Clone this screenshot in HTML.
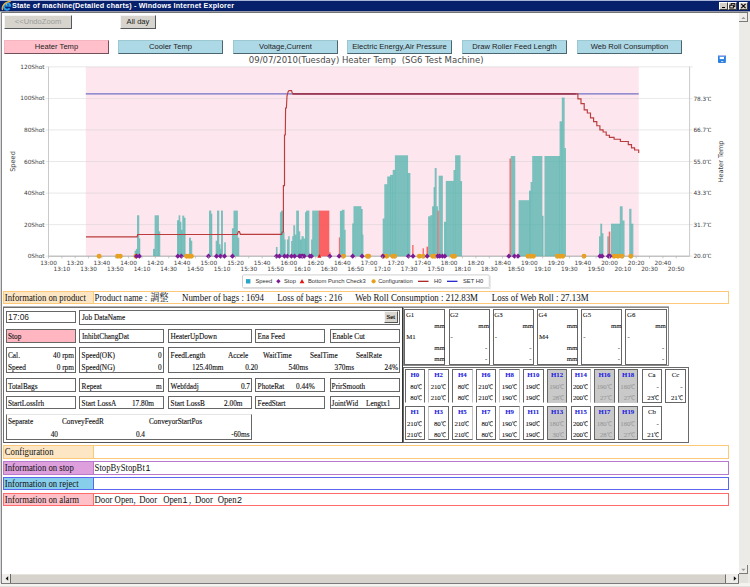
<!DOCTYPE html><html><head><meta charset="utf-8"><title>State of machine(Detailed charts)</title><style>
html,body{margin:0;padding:0;background:#fff;}
body{width:750px;height:587px;overflow:hidden;position:relative;font-family:"Liberation Serif","Noto Sans CJK JP",serif;}
.a{position:absolute;box-sizing:border-box;}
.t{position:absolute;white-space:nowrap;line-height:1;}
.sans{font-family:"Liberation Sans","Noto Sans CJK JP",sans-serif;}
.btn{position:absolute;box-sizing:border-box;font-family:"Liberation Sans",sans-serif;font-size:7.6px;text-align:center;color:#222;border-right:1px solid #55585c;border-bottom:1px solid #55585c;border-top:1px solid #f4f4f4;border-left:1px solid #f4f4f4;white-space:nowrap;}
.cell{position:absolute;box-sizing:border-box;border:1px solid #666;background:#fff;}
.c{font-size:7.3px;color:#111;-webkit-text-stroke-width:0.12px;}
.dc{display:inline-block;font-family:'WenQuanYi Zen Hei','Noto Sans CJK JP',sans-serif;font-size:0.9em;width:0.8em;transform:scaleX(.87);transform-origin:0 50%;}
.ir{transform:scaleY(1.1);transform-origin:0 100%;margin-top:0.4px;}
.h{font-size:6.8px;color:#111;-webkit-text-stroke-width:0.08px;}
</style></head><body>
<div class="a" style="left:0;top:0;width:750px;height:11px;background:#07206b;border-top:1px solid #a9b5d6"></div>
<svg class="a" style="left:1px;top:0px" width="12" height="12" viewBox="0 0 12 12"><path d="M9.3 6.6 A3.3 3.3 0 1 0 8.6 8.4" fill="none" stroke="#2a9be8" stroke-width="2"/><rect x="3.4" y="5.3" width="6" height="1.3" fill="#2a9be8"/><circle cx="5.6" cy="4.6" r="0.9" fill="#5fd0f0"/><path d="M1.6 10 C0.2 6.5 4 1.6 9.8 1.4" fill="none" stroke="#f0b030" stroke-width="1.3"/></svg>
<div class="t sans" id="title" style="left:12px;top:2.2px;font-size:7.2px;font-weight:bold;color:#fff;letter-spacing:0.18px">State of machine(Detailed charts) - Windows Internet Explorer</div>
<div class="a" style="left:719px;top:2px;width:9px;height:8px;background:#d4d0c8;border-top:1px solid #fff;border-left:1px solid #fff;border-right:1px solid #404040;border-bottom:1px solid #404040"></div>
<div class="a" style="left:728px;top:2px;width:9px;height:8px;background:#d4d0c8;border-top:1px solid #fff;border-left:1px solid #fff;border-right:1px solid #404040;border-bottom:1px solid #404040"></div>
<div class="a" style="left:739px;top:2px;width:9px;height:8px;background:#d4d0c8;border-top:1px solid #fff;border-left:1px solid #fff;border-right:1px solid #404040;border-bottom:1px solid #404040"></div>
<div class="a" style="left:722px;top:7px;width:3px;height:1px;background:#000"></div>
<svg class="a" style="left:729px;top:3px" width="7" height="6" viewBox="0 0 7 6"><rect x="2.2" y="0.6" width="3.6" height="2.8" fill="none" stroke="#000" stroke-width="0.9"/><rect x="0.8" y="2.2" width="3.6" height="2.8" fill="#d4d0c8" stroke="#000" stroke-width="0.9"/></svg>
<svg class="a" style="left:740px;top:3px" width="7" height="6" viewBox="0 0 7 6"><path d="M1.2 0.8 L5.6 5.2 M5.6 0.8 L1.2 5.2" stroke="#000" stroke-width="1.1"/></svg>
<div class="a" style="left:0;top:11px;width:750px;height:1px;background:#9598a6"></div><div class="a" style="left:0;top:12px;width:750px;height:1px;background:#747474"></div>
<div class="a" style="left:0;top:12px;width:1px;height:572px;background:#d8d8dc"></div>
<div class="a" style="left:1px;top:12px;width:1px;height:572px;background:#858585"></div>
<div class="a" style="left:748px;top:12px;width:2px;height:575px;background:#ecebe6"></div>
<div class="a" style="left:0;top:583px;width:750px;height:4px;background:#f4f3f0"></div><div class="a" style="left:0;top:586px;width:750px;height:1px;background:#e2e0db"></div>
<div class="a" style="left:1px;top:582px;width:738px;height:2px;background:#7a7a7a"></div>
<div class="a" style="left:739px;top:13px;width:9px;height:561px;background:#ecebe7"></div>
<div class="a" style="left:739px;top:13px;width:9px;height:9px;background:#eeedea;border-right:1px solid #7a7a7a;border-bottom:1px solid #7a7a7a"></div>
<svg class="a" style="left:741px;top:15.5px" width="5" height="4" viewBox="0 0 5 4"><path d="M0.3 3 L2.4 0.8 L4.5 3 Z" fill="#9a9a9a"/></svg>
<div class="a" style="left:739px;top:565px;width:9px;height:9px;background:#eeedea;border-right:1px solid #7a7a7a;border-bottom:1px solid #7a7a7a"></div>
<svg class="a" style="left:741px;top:568px" width="5" height="4" viewBox="0 0 5 4"><path d="M0.3 0.8 L2.4 3 L4.5 0.8 Z" fill="#9a9a9a"/></svg>
<div class="a" style="left:2px;top:574px;width:737px;height:9px;background:#ecebe7"></div>
<div class="a" style="left:2px;top:574px;width:9px;height:9px;background:#eeedea;border-right:1px solid #6a6a6a"></div>
<svg class="a" style="left:4.5px;top:576px" width="4" height="5" viewBox="0 0 4 5"><path d="M3.2 0.3 L0.6 2.5 L3.2 4.7 Z" fill="#111"/></svg>
<div class="a" style="left:11px;top:574px;width:715px;height:9px;background:#d6d3cc;border-right:1px solid #707070;border-top:1px solid #e6e4df"></div>
<div class="a" style="left:730px;top:574px;width:9px;height:9px;background:#eeedea;border-right:1px solid #6a6a6a"></div>
<svg class="a" style="left:733px;top:576px" width="4" height="5" viewBox="0 0 4 5"><path d="M0.8 0.3 L3.4 2.5 L0.8 4.7 Z" fill="#111"/></svg>
<div class="a" style="left:739px;top:574px;width:9px;height:9px;background:#e4e2dc"></div>
<div class="btn" style="left:4px;top:15px;width:68px;height:14px;line-height:11.5px;background:#d7d4cd;color:#9c9c9c;">&lt;&lt;UndoZoom</div>
<div class="btn" style="left:120px;top:15px;width:36px;height:14px;line-height:11.5px;background:#d7d4cd;">All day</div>
<div class="btn" style="left:4px;top:40px;width:105px;height:14px;line-height:11.5px;background:#ffc0cb;border-color:#f4b4c0 #74505a #74505a #f4b4c0;">Heater Temp</div>
<div class="btn" style="left:118px;top:40px;width:105px;height:14px;line-height:11.5px;background:#add8e6;border-color:#9cc8d2 #4a6670 #4a6670 #9cc8d2;">Cooler Temp</div>
<div class="btn" style="left:233px;top:40px;width:105px;height:14px;line-height:11.5px;background:#add8e6;border-color:#9cc8d2 #4a6670 #4a6670 #9cc8d2;">Voltage,Current</div>
<div class="btn" style="left:347px;top:40px;width:105px;height:14px;line-height:11.5px;background:#add8e6;border-color:#9cc8d2 #4a6670 #4a6670 #9cc8d2;">Electric Energy,Air Pressure</div>
<div class="btn" style="left:462px;top:40px;width:105px;height:14px;line-height:11.5px;background:#add8e6;border-color:#9cc8d2 #4a6670 #4a6670 #9cc8d2;">Draw Roller Feed Length</div>
<div class="btn" style="left:577px;top:40px;width:105px;height:14px;line-height:11.5px;background:#add8e6;border-color:#9cc8d2 #4a6670 #4a6670 #9cc8d2;">Web Roll Consumption</div>
<svg class="a" style="left:0;top:0" width="750" height="300" viewBox="0 0 750 300" font-family="DejaVu Sans, Liberation Sans, sans-serif">
<text x="366.2" y="62.8" font-size="8.52" fill="#4a4a4a" text-anchor="middle" id="ctitle" xml:space="preserve">09/07/2010(Tuesday) Heater Temp  (SG6 Test Machine)</text>
<rect x="85.8" y="66.8" width="552.9000000000001" height="189.39999999999998" fill="#fde6ee"/>
<line x1="45.5" x2="692.6" y1="256.2" y2="256.2" stroke="#d0d0d0" stroke-width="0.8" opacity="0.6"/>
<line x1="45.5" x2="692.6" y1="224.6" y2="224.6" stroke="#d0d0d0" stroke-width="0.8" opacity="0.6"/>
<line x1="45.5" x2="692.6" y1="193.1" y2="193.1" stroke="#d0d0d0" stroke-width="0.8" opacity="0.6"/>
<line x1="45.5" x2="692.6" y1="161.5" y2="161.5" stroke="#d0d0d0" stroke-width="0.8" opacity="0.6"/>
<line x1="45.5" x2="692.6" y1="129.9" y2="129.9" stroke="#d0d0d0" stroke-width="0.8" opacity="0.6"/>
<line x1="45.5" x2="692.6" y1="98.4" y2="98.4" stroke="#d0d0d0" stroke-width="0.8" opacity="0.6"/>
<line x1="45.5" x2="692.6" y1="66.8" y2="66.8" stroke="#d0d0d0" stroke-width="0.8" opacity="0.6"/>
<line x1="48.5" x2="48.5" y1="66.8" y2="256.2" stroke="#bdbdbd" stroke-width="0.8"/>
<line x1="689.6" x2="689.6" y1="66.8" y2="256.2" stroke="#bdbdbd" stroke-width="0.8"/>
<line x1="48.5" x2="689.6" y1="256.2" y2="256.2" stroke="#a8a8a8" stroke-width="0.9"/>
<rect x="134.6" y="250.7" width="1.65" height="5.5" fill="#4fb3ab" fill-opacity="0.75"/>
<rect x="135.9" y="248.9" width="1.45" height="7.3" fill="#4fb3ab" fill-opacity="0.75"/>
<rect x="137.0" y="215.3" width="2.25" height="40.9" fill="#4fb3ab" fill-opacity="0.75"/>
<rect x="138.9" y="238.5" width="1.35" height="17.7" fill="#4fb3ab" fill-opacity="0.75"/>
<rect x="153.0" y="248.9" width="1.95" height="7.3" fill="#4fb3ab" fill-opacity="0.75"/>
<rect x="154.6" y="215.3" width="4.35" height="40.9" fill="#4fb3ab" fill-opacity="0.75"/>
<rect x="158.6" y="231.4" width="1.65" height="24.8" fill="#4fb3ab" fill-opacity="0.75"/>
<rect x="177.0" y="220.2" width="1.95" height="36.0" fill="#4fb3ab" fill-opacity="0.75"/>
<rect x="178.6" y="215.3" width="1.65" height="40.9" fill="#4fb3ab" fill-opacity="0.75"/>
<rect x="179.9" y="221.8" width="1.45" height="34.4" fill="#4fb3ab" fill-opacity="0.75"/>
<rect x="181.0" y="229.8" width="1.65" height="26.4" fill="#4fb3ab" fill-opacity="0.75"/>
<rect x="182.3" y="215.6" width="1.95" height="40.6" fill="#4fb3ab" fill-opacity="0.75"/>
<rect x="183.9" y="217.8" width="1.65" height="38.4" fill="#4fb3ab" fill-opacity="0.75"/>
<rect x="189.0" y="237.7" width="1.95" height="18.5" fill="#4fb3ab" fill-opacity="0.75"/>
<rect x="190.6" y="240.7" width="1.65" height="15.5" fill="#4fb3ab" fill-opacity="0.75"/>
<rect x="209.0" y="210.6" width="2.25" height="45.6" fill="#4fb3ab" fill-opacity="0.75"/>
<rect x="210.9" y="213.7" width="1.35" height="42.5" fill="#4fb3ab" fill-opacity="0.75"/>
<rect x="215.7" y="240.7" width="1.65" height="15.5" fill="#4fb3ab" fill-opacity="0.75"/>
<rect x="217.0" y="210.6" width="2.25" height="45.6" fill="#4fb3ab" fill-opacity="0.75"/>
<rect x="218.9" y="244.2" width="1.65" height="12.0" fill="#4fb3ab" fill-opacity="0.75"/>
<rect x="220.2" y="248.9" width="1.15" height="7.3" fill="#4fb3ab" fill-opacity="0.75"/>
<rect x="221.0" y="210.6" width="1.95" height="45.6" fill="#4fb3ab" fill-opacity="0.75"/>
<rect x="224.2" y="242.3" width="1.65" height="13.9" fill="#4fb3ab" fill-opacity="0.75"/>
<rect x="231.9" y="228.3" width="1.95" height="27.9" fill="#4fb3ab" fill-opacity="0.75"/>
<rect x="233.5" y="210.6" width="4.35" height="45.6" fill="#4fb3ab" fill-opacity="0.75"/>
<rect x="237.5" y="237.7" width="1.75" height="18.5" fill="#4fb3ab" fill-opacity="0.75"/>
<rect x="275.9" y="247.0" width="1.65" height="9.2" fill="#4fb3ab" fill-opacity="0.75"/>
<rect x="279.9" y="212.2" width="1.45" height="44.0" fill="#4fb3ab" fill-opacity="0.75"/>
<rect x="281.0" y="210.6" width="2.25" height="45.6" fill="#4fb3ab" fill-opacity="0.75"/>
<rect x="282.9" y="232.2" width="1.65" height="24.0" fill="#4fb3ab" fill-opacity="0.75"/>
<rect x="284.2" y="239.5" width="1.45" height="16.7" fill="#4fb3ab" fill-opacity="0.75"/>
<rect x="286.9" y="239.5" width="1.65" height="16.7" fill="#4fb3ab" fill-opacity="0.75"/>
<rect x="288.2" y="236.2" width="1.45" height="20.0" fill="#4fb3ab" fill-opacity="0.75"/>
<rect x="291.1" y="241.0" width="1.45" height="15.2" fill="#4fb3ab" fill-opacity="0.75"/>
<rect x="292.2" y="236.2" width="1.45" height="20.0" fill="#4fb3ab" fill-opacity="0.75"/>
<rect x="293.3" y="225.3" width="1.85" height="30.9" fill="#4fb3ab" fill-opacity="0.75"/>
<rect x="294.8" y="234.6" width="1.75" height="21.6" fill="#4fb3ab" fill-opacity="0.75"/>
<rect x="296.2" y="210.6" width="2.75" height="45.6" fill="#4fb3ab" fill-opacity="0.75"/>
<rect x="298.6" y="231.4" width="1.65" height="24.8" fill="#4fb3ab" fill-opacity="0.75"/>
<rect x="299.9" y="239.5" width="1.95" height="16.7" fill="#4fb3ab" fill-opacity="0.75"/>
<rect x="301.5" y="236.2" width="2.25" height="20.0" fill="#4fb3ab" fill-opacity="0.75"/>
<rect x="303.4" y="238.5" width="1.95" height="17.7" fill="#4fb3ab" fill-opacity="0.75"/>
<rect x="305.0" y="212.2" width="1.45" height="44.0" fill="#4fb3ab" fill-opacity="0.75"/>
<rect x="306.1" y="210.6" width="3.25" height="45.6" fill="#4fb3ab" fill-opacity="0.75"/>
<rect x="311.1" y="239.5" width="1.45" height="16.7" fill="#4fb3ab" fill-opacity="0.75"/>
<rect x="312.2" y="210.6" width="7.05" height="45.6" fill="#4fb3ab" fill-opacity="0.75"/>
<rect x="339.9" y="210.9" width="2.25" height="45.3" fill="#4fb3ab" fill-opacity="0.75"/>
<rect x="341.8" y="209.8" width="2.75" height="46.4" fill="#4fb3ab" fill-opacity="0.75"/>
<rect x="344.2" y="229.8" width="1.45" height="26.4" fill="#4fb3ab" fill-opacity="0.75"/>
<rect x="352.2" y="223.4" width="1.65" height="32.8" fill="#4fb3ab" fill-opacity="0.75"/>
<rect x="353.5" y="206.2" width="7.85" height="50.0" fill="#4fb3ab" fill-opacity="0.75"/>
<rect x="361.0" y="209.0" width="1.65" height="47.2" fill="#4fb3ab" fill-opacity="0.75"/>
<rect x="362.3" y="234.6" width="1.15" height="21.6" fill="#4fb3ab" fill-opacity="0.75"/>
<rect x="382.7" y="218.5" width="1.95" height="37.7" fill="#4fb3ab" fill-opacity="0.75"/>
<rect x="384.3" y="184.2" width="3.25" height="72.0" fill="#4fb3ab" fill-opacity="0.75"/>
<rect x="387.2" y="176.5" width="3.15" height="79.7" fill="#4fb3ab" fill-opacity="0.75"/>
<rect x="390.0" y="174.9" width="3.05" height="81.3" fill="#4fb3ab" fill-opacity="0.75"/>
<rect x="392.7" y="169.9" width="2.55" height="86.3" fill="#4fb3ab" fill-opacity="0.75"/>
<rect x="394.9" y="155.3" width="13.15" height="100.9" fill="#4fb3ab" fill-opacity="0.75"/>
<rect x="407.7" y="173.0" width="2.65" height="83.2" fill="#4fb3ab" fill-opacity="0.75"/>
<rect x="428.1" y="216.3" width="2.55" height="39.9" fill="#4fb3ab" fill-opacity="0.75"/>
<rect x="430.3" y="215.2" width="2.15" height="41.0" fill="#4fb3ab" fill-opacity="0.75"/>
<rect x="432.1" y="206.3" width="1.85" height="49.9" fill="#4fb3ab" fill-opacity="0.75"/>
<rect x="433.6" y="187.1" width="1.45" height="69.1" fill="#4fb3ab" fill-opacity="0.75"/>
<rect x="434.7" y="168.0" width="1.95" height="88.2" fill="#4fb3ab" fill-opacity="0.75"/>
<rect x="436.3" y="206.3" width="1.65" height="49.9" fill="#4fb3ab" fill-opacity="0.75"/>
<rect x="438.7" y="175.7" width="4.15" height="80.5" fill="#4fb3ab" fill-opacity="0.75"/>
<rect x="444.0" y="221.8" width="2.15" height="34.4" fill="#4fb3ab" fill-opacity="0.75"/>
<rect x="445.8" y="180.9" width="8.05" height="75.3" fill="#4fb3ab" fill-opacity="0.75"/>
<rect x="453.5" y="170.0" width="1.95" height="86.2" fill="#4fb3ab" fill-opacity="0.75"/>
<rect x="455.1" y="155.3" width="5.45" height="100.9" fill="#4fb3ab" fill-opacity="0.75"/>
<rect x="460.2" y="181.1" width="1.85" height="75.1" fill="#4fb3ab" fill-opacity="0.75"/>
<rect x="510.8" y="156.0" width="4.45" height="100.2" fill="#4fb3ab" fill-opacity="0.75"/>
<rect x="518.6" y="200.2" width="10.75" height="56.0" fill="#4fb3ab" fill-opacity="0.75"/>
<rect x="529.0" y="190.7" width="1.95" height="65.5" fill="#4fb3ab" fill-opacity="0.75"/>
<rect x="530.6" y="182.0" width="1.95" height="74.2" fill="#4fb3ab" fill-opacity="0.75"/>
<rect x="532.2" y="156.0" width="10.15" height="100.2" fill="#4fb3ab" fill-opacity="0.75"/>
<rect x="542.0" y="215.8" width="1.55" height="40.4" fill="#4fb3ab" fill-opacity="0.75"/>
<rect x="544.5" y="156.0" width="15.45" height="100.2" fill="#4fb3ab" fill-opacity="0.75"/>
<rect x="559.6" y="121.3" width="2.55" height="134.9" fill="#4fb3ab" fill-opacity="0.75"/>
<rect x="561.8" y="97.6" width="2.85" height="158.6" fill="#4fb3ab" fill-opacity="0.75"/>
<rect x="564.3" y="148.1" width="1.65" height="108.1" fill="#4fb3ab" fill-opacity="0.75"/>
<rect x="599.0" y="236.3" width="1.65" height="19.9" fill="#4fb3ab" fill-opacity="0.75"/>
<rect x="600.3" y="223.7" width="1.85" height="32.5" fill="#4fb3ab" fill-opacity="0.75"/>
<rect x="601.8" y="233.2" width="1.65" height="23.0" fill="#4fb3ab" fill-opacity="0.75"/>
<rect x="607.2" y="236.3" width="1.95" height="19.9" fill="#4fb3ab" fill-opacity="0.75"/>
<rect x="611.0" y="223.7" width="9.15" height="32.5" fill="#4fb3ab" fill-opacity="0.75"/>
<rect x="619.8" y="206.3" width="2.85" height="49.9" fill="#4fb3ab" fill-opacity="0.75"/>
<rect x="622.3" y="220.5" width="2.25" height="35.7" fill="#4fb3ab" fill-opacity="0.75"/>
<rect x="629.2" y="208.8" width="2.25" height="47.3" fill="#4fb3ab" fill-opacity="0.75"/>
<rect x="631.1" y="223.7" width="2.25" height="32.5" fill="#4fb3ab" fill-opacity="0.75"/>
<rect x="318.9" y="210.6" width="10.4" height="45.6" fill="#fb5050" fill-opacity="0.88"/>
<rect x="329.3" y="252.3" width="1.3" height="3.9" fill="#fb5050" fill-opacity="0.88"/>
<rect x="338.9" y="237.4" width="1.0" height="18.8" fill="#fb5050" fill-opacity="0.88"/>
<rect x="412.2" y="245.0" width="1.3" height="11.2" fill="#fb5050" fill-opacity="0.88"/>
<rect x="422.6" y="248.3" width="1.3" height="7.9" fill="#fb5050" fill-opacity="0.88"/>
<rect x="426.5" y="246.7" width="1.6" height="9.5" fill="#fb5050" fill-opacity="0.88"/>
<rect x="437.6" y="210.7" width="1.1" height="45.5" fill="#fb5050" fill-opacity="0.88"/>
<rect x="509.5" y="158.5" width="1.3" height="97.7" fill="#fb5050" fill-opacity="0.88"/>
<rect x="608.8" y="231.6" width="1.5" height="24.6" fill="#fb5050" fill-opacity="0.88"/>
<line x1="85.8" x2="638.7" y1="93.9" y2="93.9" stroke="#7270c6" stroke-width="1.3"/>
<polyline fill="none" stroke="#bb3c3c" stroke-width="1.15" points="86.0,236.8 137.0,236.8 137.8,234.5 237.4,234.5 238.4,231.5 239.4,231.5 240.4,234.3 281.6,234.3 282.3,232.0 283.4,232.0 283.4,185.6 284.5,185.6 284.5,135.0 285.3,135.0 285.6,108.0 286.4,108.0 287.0,96.0 288.0,92.0 289.0,90.6 291.5,90.6 292.6,93.9 575.7,93.9 577.9,93.9 577.9,98.9 581.0,98.9 581.0,103.6 584.2,103.6 584.2,109.9 587.3,109.9 587.3,113.0 590.5,113.0 590.5,117.8 593.6,117.8 593.6,121.6 596.8,121.6 596.8,125.7 599.9,125.7 599.9,129.8 603.1,129.8 603.1,132.0 606.2,132.0 606.2,135.2 609.4,135.2 609.4,137.4 614.1,137.4 614.1,139.2 620.4,139.2 620.4,141.5 628.3,141.5 628.3,144.6 631.5,144.6 631.5,147.8 634.6,147.8 634.6,150.0 638.7,150.0 638.7,153.1 638.7,153.1"/>
<line x1="293" x2="575.7" y1="93.9" y2="93.9" stroke="#943050" stroke-width="1.25"/>
<circle cx="99.1" cy="256.2" r="2.45" fill="#e8a020"/>
<circle cx="117.6" cy="256.2" r="2.45" fill="#e8a020"/>
<circle cx="120.3" cy="256.2" r="2.45" fill="#e8a020"/>
<circle cx="135.9" cy="256.2" r="2.45" fill="#e8a020"/>
<circle cx="186.6" cy="256.2" r="2.45" fill="#e8a020"/>
<circle cx="189.0" cy="256.2" r="2.45" fill="#e8a020"/>
<circle cx="191.4" cy="256.2" r="2.45" fill="#e8a020"/>
<circle cx="343.4" cy="256.2" r="2.45" fill="#e8a020"/>
<circle cx="367.4" cy="256.2" r="2.45" fill="#e8a020"/>
<circle cx="368.7" cy="256.2" r="2.45" fill="#e8a020"/>
<circle cx="383.4" cy="256.2" r="2.45" fill="#e8a020"/>
<circle cx="386.8" cy="256.2" r="2.45" fill="#e8a020"/>
<circle cx="392.7" cy="256.2" r="2.45" fill="#e8a020"/>
<circle cx="394.7" cy="256.2" r="2.45" fill="#e8a020"/>
<circle cx="419.3" cy="256.2" r="2.45" fill="#e8a020"/>
<circle cx="423.2" cy="256.2" r="2.45" fill="#e8a020"/>
<circle cx="432.6" cy="256.2" r="2.45" fill="#e8a020"/>
<circle cx="435.0" cy="256.2" r="2.45" fill="#e8a020"/>
<circle cx="452.6" cy="256.2" r="2.45" fill="#e8a020"/>
<circle cx="454.6" cy="256.2" r="2.45" fill="#e8a020"/>
<circle cx="528.0" cy="256.2" r="2.45" fill="#e8a020"/>
<circle cx="530.7" cy="256.2" r="2.45" fill="#e8a020"/>
<circle cx="533.4" cy="256.2" r="2.45" fill="#e8a020"/>
<circle cx="557.4" cy="256.2" r="2.45" fill="#e8a020"/>
<circle cx="560.0" cy="256.2" r="2.45" fill="#e8a020"/>
<circle cx="562.8" cy="256.2" r="2.45" fill="#e8a020"/>
<circle cx="584.0" cy="256.2" r="2.45" fill="#e8a020"/>
<circle cx="614.1" cy="256.2" r="2.45" fill="#e8a020"/>
<circle cx="618.0" cy="256.2" r="2.45" fill="#e8a020"/>
<circle cx="622.0" cy="256.2" r="2.45" fill="#e8a020"/>
<circle cx="630.8" cy="256.2" r="2.45" fill="#e8a020"/>
<path d="M133.9 256.2 L136.5 253.6 L139.1 256.2 L136.5 258.8Z" fill="#7d1a96"/>
<path d="M136.8 256.2 L139.4 253.6 L142.0 256.2 L139.4 258.8Z" fill="#7d1a96"/>
<path d="M175.2 256.2 L177.8 253.6 L180.4 256.2 L177.8 258.8Z" fill="#7d1a96"/>
<path d="M178.7 256.2 L181.3 253.6 L183.9 256.2 L181.3 258.8Z" fill="#7d1a96"/>
<path d="M205.9 256.2 L208.5 253.6 L211.1 256.2 L208.5 258.8Z" fill="#7d1a96"/>
<path d="M213.9 256.2 L216.5 253.6 L219.1 256.2 L216.5 258.8Z" fill="#7d1a96"/>
<path d="M217.9 256.2 L220.5 253.6 L223.1 256.2 L220.5 258.8Z" fill="#7d1a96"/>
<path d="M221.9 256.2 L224.5 253.6 L227.1 256.2 L224.5 258.8Z" fill="#7d1a96"/>
<path d="M229.9 256.2 L232.5 253.6 L235.1 256.2 L232.5 258.8Z" fill="#7d1a96"/>
<path d="M273.9 256.2 L276.5 253.6 L279.1 256.2 L276.5 258.8Z" fill="#7d1a96"/>
<path d="M276.8 256.2 L279.4 253.6 L282.0 256.2 L279.4 258.8Z" fill="#7d1a96"/>
<path d="M281.9 256.2 L284.5 253.6 L287.1 256.2 L284.5 258.8Z" fill="#7d1a96"/>
<path d="M284.8 256.2 L287.4 253.6 L290.0 256.2 L287.4 258.8Z" fill="#7d1a96"/>
<path d="M288.8 256.2 L291.4 253.6 L294.0 256.2 L291.4 258.8Z" fill="#7d1a96"/>
<path d="M292.0 256.2 L294.6 253.6 L297.2 256.2 L294.6 258.8Z" fill="#7d1a96"/>
<path d="M296.8 256.2 L299.4 253.6 L302.0 256.2 L299.4 258.8Z" fill="#7d1a96"/>
<path d="M298.4 256.2 L301.0 253.6 L303.6 256.2 L301.0 258.8Z" fill="#7d1a96"/>
<path d="M300.0 256.2 L302.6 253.6 L305.2 256.2 L302.6 258.8Z" fill="#7d1a96"/>
<path d="M301.6 256.2 L304.2 253.6 L306.8 256.2 L304.2 258.8Z" fill="#7d1a96"/>
<path d="M307.2 256.2 L309.8 253.6 L312.4 256.2 L309.8 258.8Z" fill="#7d1a96"/>
<path d="M308.8 256.2 L311.4 253.6 L314.0 256.2 L311.4 258.8Z" fill="#7d1a96"/>
<path d="M327.2 256.2 L329.8 253.6 L332.4 256.2 L329.8 258.8Z" fill="#7d1a96"/>
<path d="M336.5 256.2 L339.1 253.6 L341.7 256.2 L339.1 258.8Z" fill="#7d1a96"/>
<path d="M350.1 256.2 L352.7 253.6 L355.3 256.2 L352.7 258.8Z" fill="#7d1a96"/>
<path d="M359.5 256.2 L362.1 253.6 L364.7 256.2 L362.1 258.8Z" fill="#7d1a96"/>
<path d="M380.3 256.2 L382.9 253.6 L385.5 256.2 L382.9 258.8Z" fill="#7d1a96"/>
<path d="M405.8 256.2 L408.4 253.6 L411.0 256.2 L408.4 258.8Z" fill="#7d1a96"/>
<path d="M410.4 256.2 L413.0 253.6 L415.6 256.2 L413.0 258.8Z" fill="#7d1a96"/>
<path d="M424.6 256.2 L427.2 253.6 L429.8 256.2 L427.2 258.8Z" fill="#7d1a96"/>
<path d="M435.1 256.2 L437.7 253.6 L440.3 256.2 L437.7 258.8Z" fill="#7d1a96"/>
<path d="M437.1 256.2 L439.7 253.6 L442.3 256.2 L439.7 258.8Z" fill="#7d1a96"/>
<path d="M439.8 256.2 L442.4 253.6 L445.0 256.2 L442.4 258.8Z" fill="#7d1a96"/>
<path d="M442.2 256.2 L444.8 253.6 L447.4 256.2 L444.8 258.8Z" fill="#7d1a96"/>
<path d="M506.3 256.2 L508.9 253.6 L511.5 256.2 L508.9 258.8Z" fill="#7d1a96"/>
<path d="M511.9 256.2 L514.5 253.6 L517.1 256.2 L514.5 258.8Z" fill="#7d1a96"/>
<path d="M515.4 256.2 L518.0 253.6 L520.6 256.2 L518.0 258.8Z" fill="#7d1a96"/>
<path d="M597.3 256.2 L599.9 253.6 L602.5 256.2 L599.9 258.8Z" fill="#7d1a96"/>
<path d="M599.5 256.2 L602.1 253.6 L604.7 256.2 L602.1 258.8Z" fill="#7d1a96"/>
<path d="M605.8 256.2 L608.4 253.6 L611.0 256.2 L608.4 258.8Z" fill="#7d1a96"/>
<path d="M607.4 256.2 L610.0 253.6 L612.6 256.2 L610.0 258.8Z" fill="#7d1a96"/>
<path d="M317.4 257.8 L319.4 254.0 L321.4 257.8Z" fill="#e01818"/>
<text x="44.5" y="258.2" font-size="5.8" fill="#3c3c3c" text-anchor="end">0Shot</text>
<text x="44.5" y="226.6" font-size="5.8" fill="#3c3c3c" text-anchor="end">20Shot</text>
<text x="44.5" y="195.1" font-size="5.8" fill="#3c3c3c" text-anchor="end">40Shot</text>
<text x="44.5" y="163.5" font-size="5.8" fill="#3c3c3c" text-anchor="end">60Shot</text>
<text x="44.5" y="131.9" font-size="5.8" fill="#3c3c3c" text-anchor="end">80Shot</text>
<text x="44.5" y="100.4" font-size="5.8" fill="#3c3c3c" text-anchor="end">100Shot</text>
<text x="44.5" y="68.8" font-size="5.8" fill="#3c3c3c" text-anchor="end">120Shot</text>
<text x="693.4" y="258.3" font-size="5.8" fill="#3c3c3c">20.0<tspan font-family="WenQuanYi Zen Hei, Noto Sans CJK JP, sans-serif" font-size="5.7">℃</tspan></text>
<text x="693.4" y="226.7" font-size="5.8" fill="#3c3c3c">31.7<tspan font-family="WenQuanYi Zen Hei, Noto Sans CJK JP, sans-serif" font-size="5.7">℃</tspan></text>
<text x="693.4" y="195.2" font-size="5.8" fill="#3c3c3c">43.3<tspan font-family="WenQuanYi Zen Hei, Noto Sans CJK JP, sans-serif" font-size="5.7">℃</tspan></text>
<text x="693.4" y="163.6" font-size="5.8" fill="#3c3c3c">55.0<tspan font-family="WenQuanYi Zen Hei, Noto Sans CJK JP, sans-serif" font-size="5.7">℃</tspan></text>
<text x="693.4" y="132.0" font-size="5.8" fill="#3c3c3c">66.7<tspan font-family="WenQuanYi Zen Hei, Noto Sans CJK JP, sans-serif" font-size="5.7">℃</tspan></text>
<text x="693.4" y="100.5" font-size="5.8" fill="#3c3c3c">78.3<tspan font-family="WenQuanYi Zen Hei, Noto Sans CJK JP, sans-serif" font-size="5.7">℃</tspan></text>
<line x1="48.5" x2="48.5" y1="256.2" y2="258.4" stroke="#b0b0b0" stroke-width="0.7"/>
<text x="48.5" y="264.6" font-size="5.8" fill="#3c3c3c" text-anchor="middle">13:00</text>
<line x1="61.9" x2="61.9" y1="256.2" y2="258.4" stroke="#b0b0b0" stroke-width="0.7"/>
<text x="61.9" y="270.6" font-size="5.8" fill="#3c3c3c" text-anchor="middle">13:10</text>
<line x1="75.2" x2="75.2" y1="256.2" y2="258.4" stroke="#b0b0b0" stroke-width="0.7"/>
<text x="75.2" y="264.6" font-size="5.8" fill="#3c3c3c" text-anchor="middle">13:20</text>
<line x1="88.6" x2="88.6" y1="256.2" y2="258.4" stroke="#b0b0b0" stroke-width="0.7"/>
<text x="88.6" y="270.6" font-size="5.8" fill="#3c3c3c" text-anchor="middle">13:30</text>
<line x1="101.9" x2="101.9" y1="256.2" y2="258.4" stroke="#b0b0b0" stroke-width="0.7"/>
<text x="101.9" y="264.6" font-size="5.8" fill="#3c3c3c" text-anchor="middle">13:40</text>
<line x1="115.3" x2="115.3" y1="256.2" y2="258.4" stroke="#b0b0b0" stroke-width="0.7"/>
<text x="115.3" y="270.6" font-size="5.8" fill="#3c3c3c" text-anchor="middle">13:50</text>
<line x1="128.6" x2="128.6" y1="256.2" y2="258.4" stroke="#b0b0b0" stroke-width="0.7"/>
<text x="128.6" y="264.6" font-size="5.8" fill="#3c3c3c" text-anchor="middle">14:00</text>
<line x1="142.0" x2="142.0" y1="256.2" y2="258.4" stroke="#b0b0b0" stroke-width="0.7"/>
<text x="142.0" y="270.6" font-size="5.8" fill="#3c3c3c" text-anchor="middle">14:10</text>
<line x1="155.3" x2="155.3" y1="256.2" y2="258.4" stroke="#b0b0b0" stroke-width="0.7"/>
<text x="155.3" y="264.6" font-size="5.8" fill="#3c3c3c" text-anchor="middle">14:20</text>
<line x1="168.7" x2="168.7" y1="256.2" y2="258.4" stroke="#b0b0b0" stroke-width="0.7"/>
<text x="168.7" y="270.6" font-size="5.8" fill="#3c3c3c" text-anchor="middle">14:30</text>
<line x1="182.1" x2="182.1" y1="256.2" y2="258.4" stroke="#b0b0b0" stroke-width="0.7"/>
<text x="182.1" y="264.6" font-size="5.8" fill="#3c3c3c" text-anchor="middle">14:40</text>
<line x1="195.4" x2="195.4" y1="256.2" y2="258.4" stroke="#b0b0b0" stroke-width="0.7"/>
<text x="195.4" y="270.6" font-size="5.8" fill="#3c3c3c" text-anchor="middle">14:50</text>
<line x1="208.8" x2="208.8" y1="256.2" y2="258.4" stroke="#b0b0b0" stroke-width="0.7"/>
<text x="208.8" y="264.6" font-size="5.8" fill="#3c3c3c" text-anchor="middle">15:00</text>
<line x1="222.1" x2="222.1" y1="256.2" y2="258.4" stroke="#b0b0b0" stroke-width="0.7"/>
<text x="222.1" y="270.6" font-size="5.8" fill="#3c3c3c" text-anchor="middle">15:10</text>
<line x1="235.5" x2="235.5" y1="256.2" y2="258.4" stroke="#b0b0b0" stroke-width="0.7"/>
<text x="235.5" y="264.6" font-size="5.8" fill="#3c3c3c" text-anchor="middle">15:20</text>
<line x1="248.8" x2="248.8" y1="256.2" y2="258.4" stroke="#b0b0b0" stroke-width="0.7"/>
<text x="248.8" y="270.6" font-size="5.8" fill="#3c3c3c" text-anchor="middle">15:30</text>
<line x1="262.2" x2="262.2" y1="256.2" y2="258.4" stroke="#b0b0b0" stroke-width="0.7"/>
<text x="262.2" y="264.6" font-size="5.8" fill="#3c3c3c" text-anchor="middle">15:40</text>
<line x1="275.6" x2="275.6" y1="256.2" y2="258.4" stroke="#b0b0b0" stroke-width="0.7"/>
<text x="275.6" y="270.6" font-size="5.8" fill="#3c3c3c" text-anchor="middle">15:50</text>
<line x1="288.9" x2="288.9" y1="256.2" y2="258.4" stroke="#b0b0b0" stroke-width="0.7"/>
<text x="288.9" y="264.6" font-size="5.8" fill="#3c3c3c" text-anchor="middle">16:00</text>
<line x1="302.3" x2="302.3" y1="256.2" y2="258.4" stroke="#b0b0b0" stroke-width="0.7"/>
<text x="302.3" y="270.6" font-size="5.8" fill="#3c3c3c" text-anchor="middle">16:10</text>
<line x1="315.6" x2="315.6" y1="256.2" y2="258.4" stroke="#b0b0b0" stroke-width="0.7"/>
<text x="315.6" y="264.6" font-size="5.8" fill="#3c3c3c" text-anchor="middle">16:20</text>
<line x1="329.0" x2="329.0" y1="256.2" y2="258.4" stroke="#b0b0b0" stroke-width="0.7"/>
<text x="329.0" y="270.6" font-size="5.8" fill="#3c3c3c" text-anchor="middle">16:30</text>
<line x1="342.3" x2="342.3" y1="256.2" y2="258.4" stroke="#b0b0b0" stroke-width="0.7"/>
<text x="342.3" y="264.6" font-size="5.8" fill="#3c3c3c" text-anchor="middle">16:40</text>
<line x1="355.7" x2="355.7" y1="256.2" y2="258.4" stroke="#b0b0b0" stroke-width="0.7"/>
<text x="355.7" y="270.6" font-size="5.8" fill="#3c3c3c" text-anchor="middle">16:50</text>
<line x1="369.1" x2="369.1" y1="256.2" y2="258.4" stroke="#b0b0b0" stroke-width="0.7"/>
<text x="369.1" y="264.6" font-size="5.8" fill="#3c3c3c" text-anchor="middle">17:00</text>
<line x1="382.4" x2="382.4" y1="256.2" y2="258.4" stroke="#b0b0b0" stroke-width="0.7"/>
<text x="382.4" y="270.6" font-size="5.8" fill="#3c3c3c" text-anchor="middle">17:10</text>
<line x1="395.8" x2="395.8" y1="256.2" y2="258.4" stroke="#b0b0b0" stroke-width="0.7"/>
<text x="395.8" y="264.6" font-size="5.8" fill="#3c3c3c" text-anchor="middle">17:20</text>
<line x1="409.1" x2="409.1" y1="256.2" y2="258.4" stroke="#b0b0b0" stroke-width="0.7"/>
<text x="409.1" y="270.6" font-size="5.8" fill="#3c3c3c" text-anchor="middle">17:30</text>
<line x1="422.5" x2="422.5" y1="256.2" y2="258.4" stroke="#b0b0b0" stroke-width="0.7"/>
<text x="422.5" y="264.6" font-size="5.8" fill="#3c3c3c" text-anchor="middle">17:40</text>
<line x1="435.8" x2="435.8" y1="256.2" y2="258.4" stroke="#b0b0b0" stroke-width="0.7"/>
<text x="435.8" y="270.6" font-size="5.8" fill="#3c3c3c" text-anchor="middle">17:50</text>
<line x1="449.2" x2="449.2" y1="256.2" y2="258.4" stroke="#b0b0b0" stroke-width="0.7"/>
<text x="449.2" y="264.6" font-size="5.8" fill="#3c3c3c" text-anchor="middle">18:00</text>
<line x1="462.5" x2="462.5" y1="256.2" y2="258.4" stroke="#b0b0b0" stroke-width="0.7"/>
<text x="462.5" y="270.6" font-size="5.8" fill="#3c3c3c" text-anchor="middle">18:10</text>
<line x1="475.9" x2="475.9" y1="256.2" y2="258.4" stroke="#b0b0b0" stroke-width="0.7"/>
<text x="475.9" y="264.6" font-size="5.8" fill="#3c3c3c" text-anchor="middle">18:20</text>
<line x1="489.3" x2="489.3" y1="256.2" y2="258.4" stroke="#b0b0b0" stroke-width="0.7"/>
<text x="489.3" y="270.6" font-size="5.8" fill="#3c3c3c" text-anchor="middle">18:30</text>
<line x1="502.6" x2="502.6" y1="256.2" y2="258.4" stroke="#b0b0b0" stroke-width="0.7"/>
<text x="502.6" y="264.6" font-size="5.8" fill="#3c3c3c" text-anchor="middle">18:40</text>
<line x1="516.0" x2="516.0" y1="256.2" y2="258.4" stroke="#b0b0b0" stroke-width="0.7"/>
<text x="516.0" y="270.6" font-size="5.8" fill="#3c3c3c" text-anchor="middle">18:50</text>
<line x1="529.3" x2="529.3" y1="256.2" y2="258.4" stroke="#b0b0b0" stroke-width="0.7"/>
<text x="529.3" y="264.6" font-size="5.8" fill="#3c3c3c" text-anchor="middle">19:00</text>
<line x1="542.7" x2="542.7" y1="256.2" y2="258.4" stroke="#b0b0b0" stroke-width="0.7"/>
<text x="542.7" y="270.6" font-size="5.8" fill="#3c3c3c" text-anchor="middle">19:10</text>
<line x1="556.0" x2="556.0" y1="256.2" y2="258.4" stroke="#b0b0b0" stroke-width="0.7"/>
<text x="556.0" y="264.6" font-size="5.8" fill="#3c3c3c" text-anchor="middle">19:20</text>
<line x1="569.4" x2="569.4" y1="256.2" y2="258.4" stroke="#b0b0b0" stroke-width="0.7"/>
<text x="569.4" y="270.6" font-size="5.8" fill="#3c3c3c" text-anchor="middle">19:30</text>
<line x1="582.8" x2="582.8" y1="256.2" y2="258.4" stroke="#b0b0b0" stroke-width="0.7"/>
<text x="582.8" y="264.6" font-size="5.8" fill="#3c3c3c" text-anchor="middle">19:40</text>
<line x1="596.1" x2="596.1" y1="256.2" y2="258.4" stroke="#b0b0b0" stroke-width="0.7"/>
<text x="596.1" y="270.6" font-size="5.8" fill="#3c3c3c" text-anchor="middle">19:50</text>
<line x1="609.5" x2="609.5" y1="256.2" y2="258.4" stroke="#b0b0b0" stroke-width="0.7"/>
<text x="609.5" y="264.6" font-size="5.8" fill="#3c3c3c" text-anchor="middle">20:00</text>
<line x1="622.8" x2="622.8" y1="256.2" y2="258.4" stroke="#b0b0b0" stroke-width="0.7"/>
<text x="622.8" y="270.6" font-size="5.8" fill="#3c3c3c" text-anchor="middle">20:10</text>
<line x1="636.2" x2="636.2" y1="256.2" y2="258.4" stroke="#b0b0b0" stroke-width="0.7"/>
<text x="636.2" y="264.6" font-size="5.8" fill="#3c3c3c" text-anchor="middle">20:20</text>
<line x1="649.5" x2="649.5" y1="256.2" y2="258.4" stroke="#b0b0b0" stroke-width="0.7"/>
<text x="649.5" y="270.6" font-size="5.8" fill="#3c3c3c" text-anchor="middle">20:30</text>
<line x1="662.9" x2="662.9" y1="256.2" y2="258.4" stroke="#b0b0b0" stroke-width="0.7"/>
<text x="662.9" y="264.6" font-size="5.8" fill="#3c3c3c" text-anchor="middle">20:40</text>
<line x1="676.2" x2="676.2" y1="256.2" y2="258.4" stroke="#b0b0b0" stroke-width="0.7"/>
<text x="676.2" y="270.6" font-size="5.8" fill="#3c3c3c" text-anchor="middle">20:50</text>
<text transform="translate(14.8,161.5) rotate(-90)" font-size="6.6" fill="#444" text-anchor="middle">Speed</text>
<text transform="translate(722.6,161.5) rotate(-90)" font-size="6.6" fill="#444" text-anchor="middle">Heater Temp</text>
<g transform="translate(718,55)"><rect x="0" y="0.3" width="7.9" height="7.7" rx="0.9" fill="#2a80e2"/><rect x="0.8" y="0" width="6.3" height="1.3" fill="#b9b6f0"/><rect x="1.7" y="1.9" width="4.3" height="2.2" fill="#ffffff"/><rect x="3" y="6.2" width="2.4" height="0.9" fill="#e9e4d0"/></g>
<rect x="242.5" y="274.9" width="246.8" height="12.8" fill="#fff" stroke="#c4c4c4" stroke-width="0.8" rx="1"/>
<rect x="243.8" y="288" width="246.5" height="0.9" fill="#dcdcdc"/><rect x="489.7" y="276.2" width="0.9" height="12.4" fill="#dcdcdc"/>
<rect x="246" y="279.1" width="4.4" height="4.4" fill="#2aa7c4"/>
<text x="255.5" y="283.3" font-size="5.8" fill="#333" font-family="Liberation Sans, sans-serif">Speed</text>
<path d="M276.2 281.3 L278.4 279.1 L280.6 281.3 L278.4 283.5Z" fill="#7d1a96"/>
<text x="284" y="283.3" font-size="5.8" fill="#333" font-family="Liberation Sans, sans-serif">Stop</text>
<path d="M299.6 283.3 L302 278.90000000000003 L304.4 283.3Z" fill="#e01818"/>
<text x="308" y="283.3" font-size="5.8" fill="#333" font-family="Liberation Sans, sans-serif">Bottom Punch Check3</text>
<circle cx="373.6" cy="281.3" r="2.1" fill="#e8a020"/>
<text x="378.2" y="283.3" font-size="5.8" fill="#333" font-family="Liberation Sans, sans-serif">Configuration</text>
<line x1="418" x2="428.5" y1="281.3" y2="281.3" stroke="#a01414" stroke-width="1.2"/>
<text x="434" y="283.3" font-size="5.8" fill="#333" font-family="Liberation Sans, sans-serif">H0</text>
<line x1="447" x2="457.5" y1="281.3" y2="281.3" stroke="#1414c8" stroke-width="1.2"/>
<text x="463" y="283.3" font-size="5.8" fill="#333" font-family="Liberation Sans, sans-serif">SET H0</text>
</svg>
<div class="a" style="left:3px;top:291px;width:726px;height:13px;border:1px solid #fdc877;background:#fff"></div>
<div class="a" style="left:3px;top:291px;width:91px;height:13px;border:1px solid #fdc877;background:#fde6c4"></div>
<div class="t ir" style="left:4.8px;top:293.4px;font-size:8.7px;color:#111">Information on product</div>
<div class="t ir" style="left:182px;top:293.3px;font-size:8.9px;color:#111;">Number of bags : 1694</div>
<div class="t ir" style="left:277.2px;top:293.3px;font-size:8.9px;color:#111;">Loss of bags : 216</div>
<div class="t ir" style="left:355.2px;top:293.3px;font-size:8.9px;color:#111;">Web Roll Consumption : 212.83M</div>
<div class="t ir" style="left:491.8px;top:293.3px;font-size:8.9px;color:#111;">Loss of Web Roll : 27.13M</div>
<div class="t ir" style="left:94.6px;top:293.4px;font-size:8.7px;color:#111;">Product name : <span style="font-size:9.2px;font-family:'Noto Serif CJK SC','Noto Sans CJK JP',serif;line-height:0;position:relative;top:-0.3px;margin-left:0.8px">調整</span></div>
<div class="a" style="left:3px;top:445px;width:726px;height:14px;border:1px solid #fdc877;background:#fff"></div>
<div class="a" style="left:3px;top:445px;width:91px;height:14px;border:1px solid #fdc877;background:#fde6c4"></div>
<div class="t ir" style="left:4.8px;top:447.9px;font-size:8.7px;color:#111">Configuration</div>
<div class="a" style="left:3px;top:461px;width:726px;height:14px;border:1px solid #b878cc;background:#fff"></div>
<div class="a" style="left:3px;top:461px;width:91px;height:14px;border:1px solid #b878cc;background:#dda0dd"></div>
<div class="t ir" style="left:4.8px;top:463.9px;font-size:8.7px;color:#111">Information on stop</div>
<div class="t ir" style="left:94.6px;top:463.9px;font-size:8.7px;color:#111;">StopByStopBt<span class="sans" style="font-size:9px;margin-left:0.8px">1</span></div>
<div class="a" style="left:3px;top:477px;width:726px;height:13px;border:1px solid #5a66ee;background:#fff"></div>
<div class="a" style="left:3px;top:477px;width:91px;height:13px;border:1px solid #5a66ee;background:#87ceeb"></div>
<div class="t ir" style="left:4.8px;top:479.4px;font-size:8.7px;color:#111">Information on reject</div>
<div class="a" style="left:3px;top:493px;width:726px;height:13px;border:1px solid #ff6a6a;background:#fff"></div>
<div class="a" style="left:3px;top:493px;width:91px;height:13px;border:1px solid #ff6a6a;background:#ffc0c8"></div>
<div class="t ir" style="left:4.8px;top:495.4px;font-size:8.7px;color:#111">Information on alarm</div>
<div class="t ir" style="left:94.6px;top:495.4px;font-size:8.7px;color:#111;"><span id="d1">Door Open, </span><span id="d2" style="margin-left:1.4px">Door</span>&nbsp; <span id="d3" style="margin-left:1.8px">Open</span><span class="sans" style="font-size:9px;margin-left:0.5px">1</span><span style="margin-left:1.6px">,</span> <span id="d4" style="margin-left:1.5px">Door</span>&nbsp; <span id="d5" style="margin-left:0.6px">Open</span><span id="d6" class="sans" style="font-size:9px;margin-left:0.5px">2</span></div>
<div class="a" style="left:3px;top:306px;width:400px;height:137px;border:1px solid #707070;border-top:2px solid #707070;border-right:1px solid #333;border-bottom-color:#555"></div><div class="a" style="left:3px;top:306px;width:666px;height:1px;background:#b4b4b4"></div><div class="a" style="left:403px;top:307px;width:266px;height:1px;background:#8a8a8a"></div><div class="a" style="left:403px;top:442px;width:286px;height:1px;background:#555"></div>
<div class="cell" style="left:6.2px;top:310.7px;width:69.5px;height:12.800000000000011px;background:#fff;"></div>
<div class="t sans" style="left:8px;top:313.09999999999997px;font-size:8.4px;color:#222">17:06</div>
<div class="cell" style="left:79.3px;top:310px;width:320.7px;height:15px;background:#fff;"></div>
<div class="t c" style="left:82px;top:313.9px;">Job DataName</div>
<div class="a" style="left:384.3px;top:311px;width:13.4px;height:11.7px;background:#d9d6cf;border-top:1px solid #f6f6f6;border-left:1px solid #f6f6f6;border-right:1px solid #555;border-bottom:1px solid #555"></div>
<div class="t" style="left:386.6px;top:313.7px;font-size:6.6px;color:#111;-webkit-text-stroke-width:0.2px">Set</div>
<div class="cell" style="left:6.2px;top:329px;width:69.5px;height:13.5px;background:#ffb6c1;"></div>
<div class="t c" style="left:8px;top:333.2px;">Stop</div>
<div class="cell" style="left:79.3px;top:329px;width:85.2px;height:13.5px;background:#fff;"></div>
<div class="t c" style="left:81.89999999999999px;top:333.2px;">InhibtChangDat</div>
<div class="cell" style="left:168px;top:329px;width:84px;height:13.5px;background:#fff;"></div>
<div class="t c" style="left:170.6px;top:333.2px;">HeaterUpDown</div>
<div class="cell" style="left:255px;top:329px;width:70.39999999999998px;height:13.5px;background:#fff;"></div>
<div class="t c" style="left:257.6px;top:333.2px;">Ena Feed</div>
<div class="cell" style="left:329.6px;top:329px;width:70.39999999999998px;height:13.5px;background:#fff;"></div>
<div class="t c" style="left:332.20000000000005px;top:333.2px;">Enable Cut</div>
<div class="cell" style="left:6.2px;top:347.2px;width:69.5px;height:26.30000000000001px;background:#fff;"></div>
<div class="t c" style="left:8px;top:351.7px;">Cal.</div>
<div class="t c" style="right:676.1px;top:351.7px;">40 rpm</div>
<div class="t c" style="left:8px;top:364.3px;">Speed</div>
<div class="t c" style="right:676.1px;top:364.3px;">0 rpm</div>
<div class="cell" style="left:79.3px;top:347.2px;width:85.2px;height:26.30000000000001px;background:#fff;"></div>
<div class="t c" style="left:81.6px;top:351.7px;">Speed(OK)</div>
<div class="t c" style="right:588.3px;top:351.7px;">0</div>
<div class="t c" style="left:81.6px;top:364.3px;">Speed(NG)</div>
<div class="t c" style="right:588.3px;top:364.3px;">0</div>
<div class="cell" style="left:168px;top:347.2px;width:232px;height:26.30000000000001px;background:#fff;"></div>
<div class="t c" style="left:170.6px;top:351.7px;">FeedLength</div>
<div class="t c" style="left:228px;top:351.7px;">Accele</div>
<div class="t c" style="left:263px;top:351.7px;">WaitTime</div>
<div class="t c" style="left:310px;top:351.7px;">SealTime</div>
<div class="t c" style="left:356px;top:351.7px;">SealRate</div>
<div class="t c" style="right:526.5px;top:364.3px;">125.40mm</div>
<div class="t c" style="right:492px;top:364.3px;">0.20</div>
<div class="t c" style="right:442px;top:364.3px;">540ms</div>
<div class="t c" style="right:396px;top:364.3px;">370ms</div>
<div class="t c" style="right:352px;top:364.3px;">24%</div>
<div class="cell" style="left:6.2px;top:378.4px;width:69.5px;height:13.200000000000045px;background:#fff;"></div>
<div class="t c" style="left:8px;top:382.5px;">TotalBags</div>
<div class="cell" style="left:79.3px;top:378.4px;width:85.2px;height:13.200000000000045px;background:#fff;"></div>
<div class="t c" style="left:81.6px;top:382.5px;">Repeat</div>
<div class="t c" style="right:588.3px;top:382.5px;">m</div>
<div class="cell" style="left:168px;top:378.4px;width:84px;height:13.200000000000045px;background:#fff;"></div>
<div class="t c" style="left:170.6px;top:382.5px;">Webfdadj</div>
<div class="t c" style="right:500px;top:382.5px;">0.7</div>
<div class="cell" style="left:255px;top:378.4px;width:70.39999999999998px;height:13.200000000000045px;background:#fff;"></div>
<div class="t c" style="left:257.6px;top:382.5px;">PhoteRat</div>
<div class="t c" style="left:296px;top:382.5px;">0.44%</div>
<div class="cell" style="left:329.6px;top:378.4px;width:70.39999999999998px;height:13.200000000000045px;background:#fff;"></div>
<div class="t c" style="left:331.6px;top:382.5px;">PrirSmooth</div>
<div class="cell" style="left:6.2px;top:395.7px;width:69.5px;height:13.199999999999989px;background:#fff;"></div>
<div class="t c" style="left:8px;top:400.09999999999997px;">StartLossIrh</div>
<div class="cell" style="left:79.3px;top:395.7px;width:85.2px;height:13.199999999999989px;background:#fff;"></div>
<div class="t c" style="left:81.6px;top:400.09999999999997px;">Start LossA</div>
<div class="t c" style="right:596px;top:400.09999999999997px;">17.80m</div>
<div class="cell" style="left:168px;top:395.7px;width:84px;height:13.199999999999989px;background:#fff;"></div>
<div class="t c" style="left:170.6px;top:400.09999999999997px;">Start LossB</div>
<div class="t c" style="right:507.5px;top:400.09999999999997px;">2.00m</div>
<div class="cell" style="left:255px;top:395.7px;width:70.39999999999998px;height:13.199999999999989px;background:#fff;"></div>
<div class="t c" style="left:257.6px;top:400.09999999999997px;">FeedStart</div>
<div class="cell" style="left:329.6px;top:395.7px;width:70.39999999999998px;height:13.199999999999989px;background:#fff;"></div>
<div class="t c" style="left:331.6px;top:400.09999999999997px;">JointWid</div>
<div class="t c" style="left:366px;top:400.09999999999997px;">Lengtx1</div>
<div class="cell" style="left:6.2px;top:413.5px;width:245.8px;height:26.100000000000023px;background:#fff;border-top-color:#e4e4e4;"></div>
<div class="t c" style="left:8px;top:418.0px;">Separate</div>
<div class="t c" style="left:62px;top:418.0px;">ConveyFeedR</div>
<div class="t c" style="left:149px;top:418.0px;">ConveyorStartPos</div>
<div class="t c" style="right:692px;top:430.5px;">40</div>
<div class="t c" style="right:605px;top:430.5px;">0.4</div>
<div class="t c" style="right:500.5px;top:430.5px;">-60ms</div>
<div class="a" style="left:403px;top:307px;width:266px;height:59px;border:1px solid #8a8a8a;border-top:none"></div>
<div class="cell" style="left:404.3px;top:308.6px;width:41.19999999999999px;height:56.299999999999955px;background:#fff;"></div>
<div class="t h" style="left:405.9px;top:312px;">G1</div>
<div class="t h" style="left:406.3px;top:333.5px;">M1</div>
<div class="t h" style="right:305.3px;top:322.8px;">mm</div>
<div class="t h" style="right:305.3px;top:344.6px;">mm</div>
<div class="t h" style="right:305.3px;top:355.8px;">mm</div>
<div class="cell" style="left:448.5px;top:308.6px;width:41.19999999999999px;height:56.299999999999955px;background:#fff;"></div>
<div class="t h" style="left:450.1px;top:312px;">G2</div>
<div class="t h" style="left:450.5px;top:333.5px;">-</div>
<div class="t h" style="right:261.08000000000004px;top:322.8px;">mm</div>
<div class="t h" style="right:262.68px;top:344.6px;">-</div>
<div class="t h" style="right:262.68px;top:355.8px;">-</div>
<div class="cell" style="left:492.7px;top:308.6px;width:41.19999999999999px;height:56.299999999999955px;background:#fff;"></div>
<div class="t h" style="left:494.3px;top:312px;">G3</div>
<div class="t h" style="left:494.7px;top:333.5px;">-</div>
<div class="t h" style="right:216.8599999999999px;top:322.8px;">mm</div>
<div class="t h" style="right:218.45999999999992px;top:344.6px;">-</div>
<div class="t h" style="right:218.45999999999992px;top:355.8px;">-</div>
<div class="cell" style="left:537.0px;top:308.6px;width:41.200000000000045px;height:56.299999999999955px;background:#fff;"></div>
<div class="t h" style="left:538.6px;top:312px;">G4</div>
<div class="t h" style="left:539.0px;top:333.5px;">M4</div>
<div class="t h" style="right:172.63999999999987px;top:322.8px;">mm</div>
<div class="t h" style="right:172.63999999999987px;top:344.6px;">mm</div>
<div class="t h" style="right:172.63999999999987px;top:355.8px;">mm</div>
<div class="cell" style="left:581.2px;top:308.6px;width:41.19999999999993px;height:56.299999999999955px;background:#fff;"></div>
<div class="t h" style="left:582.8px;top:312px;">G5</div>
<div class="t h" style="left:583.2px;top:333.5px;">-</div>
<div class="t h" style="right:128.41999999999985px;top:322.8px;">mm</div>
<div class="t h" style="right:130.01999999999987px;top:344.6px;">-</div>
<div class="t h" style="right:130.01999999999987px;top:355.8px;">-</div>
<div class="cell" style="left:625.4px;top:308.6px;width:41.200000000000045px;height:56.299999999999955px;background:#fff;"></div>
<div class="t h" style="left:627.0px;top:312px;">G6</div>
<div class="t h" style="left:627.4px;top:333.5px;">-</div>
<div class="t h" style="right:84.19999999999993px;top:322.8px;">mm</div>
<div class="t h" style="right:85.79999999999995px;top:344.6px;">-</div>
<div class="t h" style="right:85.79999999999995px;top:355.8px;">-</div>
<div class="a" style="left:403px;top:367px;width:285.5px;height:75.5px;border:1px solid #6a6a6a;"></div>
<div class="cell" style="left:404.6px;top:369px;width:20.5px;height:34px;background:#fff;border-bottom-color:#fff;"></div>
<div class="t h" style="left:404.6px;width:20.5px;text-align:center;top:372.2px;color:#1a1ae0;font-weight:bold">H0</div>
<div class="t h" style="right:328.1px;top:383.8px;color:#111;font-size:6.9px;letter-spacing:-0.15px">80<span class="dc">℃</span></div>
<div class="t h" style="right:328.1px;top:394.7px;color:#111;font-size:6.9px;letter-spacing:-0.15px">80<span class="dc">℃</span></div>
<div class="cell" style="left:428.3px;top:369px;width:20.5px;height:34px;background:#fff;border-bottom-color:#fff;border-left-color:#c4c4c4;"></div>
<div class="t h" style="left:428.3px;width:20.5px;text-align:center;top:372.2px;color:#1a1ae0;font-weight:bold">H2</div>
<div class="t h" style="right:304.4px;top:383.8px;color:#111;font-size:6.9px;letter-spacing:-0.15px">210<span class="dc">℃</span></div>
<div class="t h" style="right:304.4px;top:394.7px;color:#111;font-size:6.9px;letter-spacing:-0.15px">210<span class="dc">℃</span></div>
<div class="cell" style="left:452.0px;top:369px;width:20.5px;height:34px;background:#fff;border-bottom-color:#fff;border-right-color:#c4c4c4;"></div>
<div class="t h" style="left:452.0px;width:20.5px;text-align:center;top:372.2px;color:#1a1ae0;font-weight:bold">H4</div>
<div class="t h" style="right:280.7px;top:383.8px;color:#111;font-size:6.9px;letter-spacing:-0.15px">80<span class="dc">℃</span></div>
<div class="t h" style="right:280.7px;top:394.7px;color:#111;font-size:6.9px;letter-spacing:-0.15px">80<span class="dc">℃</span></div>
<div class="cell" style="left:475.7px;top:369px;width:20.5px;height:34px;background:#fff;border-bottom-color:#fff;"></div>
<div class="t h" style="left:475.7px;width:20.5px;text-align:center;top:372.2px;color:#1a1ae0;font-weight:bold">H6</div>
<div class="t h" style="right:257.0px;top:383.8px;color:#111;font-size:6.9px;letter-spacing:-0.15px">210<span class="dc">℃</span></div>
<div class="t h" style="right:257.0px;top:394.7px;color:#111;font-size:6.9px;letter-spacing:-0.15px">210<span class="dc">℃</span></div>
<div class="cell" style="left:499.4px;top:369px;width:20.5px;height:34px;background:#fff;border-bottom-color:#fff;border-left-color:#c4c4c4;border-right-color:#c4c4c4;"></div>
<div class="t h" style="left:499.4px;width:20.5px;text-align:center;top:372.2px;color:#1a1ae0;font-weight:bold">H8</div>
<div class="t h" style="right:233.3px;top:383.8px;color:#111;font-size:6.9px;letter-spacing:-0.15px">190<span class="dc">℃</span></div>
<div class="t h" style="right:233.3px;top:394.7px;color:#111;font-size:6.9px;letter-spacing:-0.15px">190<span class="dc">℃</span></div>
<div class="cell" style="left:523.1px;top:369px;width:20.5px;height:34px;background:#fff;border-bottom-color:#fff;"></div>
<div class="t h" style="left:523.1px;width:20.5px;text-align:center;top:372.2px;color:#1a1ae0;font-weight:bold">H10</div>
<div class="t h" style="right:209.6px;top:383.8px;color:#111;font-size:6.9px;letter-spacing:-0.15px">190<span class="dc">℃</span></div>
<div class="t h" style="right:209.6px;top:394.7px;color:#111;font-size:6.9px;letter-spacing:-0.15px">190<span class="dc">℃</span></div>
<div class="cell" style="left:546.8px;top:369px;width:20.5px;height:34px;background:#c9c9c9;border-bottom-color:#c9c9c9;"></div>
<div class="t h" style="left:546.8px;width:20.5px;text-align:center;top:372.2px;color:#1a1ae0;font-weight:bold">H12</div>
<div class="t h" style="right:185.9px;top:383.8px;color:#9a9a9a;font-size:6.9px;letter-spacing:-0.15px">190<span class="dc">℃</span></div>
<div class="t h" style="right:185.9px;top:394.7px;color:#9a9a9a;font-size:6.9px;letter-spacing:-0.15px">28<span class="dc">℃</span></div>
<div class="cell" style="left:570.5px;top:369px;width:20.5px;height:34px;background:#fff;border-bottom-color:#fff;border-right-color:#c4c4c4;"></div>
<div class="t h" style="left:570.5px;width:20.5px;text-align:center;top:372.2px;color:#1a1ae0;font-weight:bold">H14</div>
<div class="t h" style="right:162.2px;top:383.8px;color:#111;font-size:6.9px;letter-spacing:-0.15px">200<span class="dc">℃</span></div>
<div class="t h" style="right:162.2px;top:394.7px;color:#111;font-size:6.9px;letter-spacing:-0.15px">200<span class="dc">℃</span></div>
<div class="cell" style="left:594.2px;top:369px;width:20.5px;height:34px;background:#c9c9c9;border-bottom-color:#c9c9c9;"></div>
<div class="t h" style="left:594.2px;width:20.5px;text-align:center;top:372.2px;color:#1a1ae0;font-weight:bold">H16</div>
<div class="t h" style="right:138.5px;top:383.8px;color:#9a9a9a;font-size:6.9px;letter-spacing:-0.15px">190<span class="dc">℃</span></div>
<div class="t h" style="right:138.5px;top:394.7px;color:#9a9a9a;font-size:6.9px;letter-spacing:-0.15px">27<span class="dc">℃</span></div>
<div class="cell" style="left:617.9px;top:369px;width:20.5px;height:34px;background:#c9c9c9;border-bottom-color:#c9c9c9;"></div>
<div class="t h" style="left:617.9px;width:20.5px;text-align:center;top:372.2px;color:#1a1ae0;font-weight:bold">H18</div>
<div class="t h" style="right:114.8px;top:383.8px;color:#9a9a9a;font-size:6.9px;letter-spacing:-0.15px">160<span class="dc">℃</span></div>
<div class="t h" style="right:114.8px;top:394.7px;color:#9a9a9a;font-size:6.9px;letter-spacing:-0.15px">27<span class="dc">℃</span></div>
<div class="cell" style="left:641.6px;top:369px;width:20.5px;height:34px;background:#fff;"></div>
<div class="t h" style="left:641.6px;width:20.5px;text-align:center;top:372.2px;color:#111;font-weight:normal">Ca</div>
<div class="t h" style="right:91.3px;top:383.8px;color:#111;font-size:6.9px;letter-spacing:-0.15px">-</div>
<div class="t h" style="right:91.1px;top:394.7px;color:#111;font-size:6.9px;letter-spacing:-0.15px">23<span class="dc">℃</span></div>
<div class="cell" style="left:665.3px;top:369px;width:20.5px;height:34px;background:#fff;"></div>
<div class="t h" style="left:665.3px;width:20.5px;text-align:center;top:372.2px;color:#111;font-weight:normal">Cc</div>
<div class="t h" style="right:67.6px;top:383.8px;color:#111;font-size:6.9px;letter-spacing:-0.15px">-</div>
<div class="t h" style="right:67.4px;top:394.7px;color:#111;font-size:6.9px;letter-spacing:-0.15px">21<span class="dc">℃</span></div>
<div class="cell" style="left:404.6px;top:406px;width:20.5px;height:34px;background:#fff;"></div>
<div class="t h" style="left:404.6px;width:20.5px;text-align:center;top:409.2px;color:#1a1ae0;font-weight:bold">H1</div>
<div class="t h" style="right:328.1px;top:420.8px;color:#111;font-size:6.9px;letter-spacing:-0.15px">210<span class="dc">℃</span></div>
<div class="t h" style="right:328.1px;top:431.7px;color:#111;font-size:6.9px;letter-spacing:-0.15px">210<span class="dc">℃</span></div>
<div class="cell" style="left:428.3px;top:406px;width:20.5px;height:34px;background:#fff;border-left-color:#c4c4c4;"></div>
<div class="t h" style="left:428.3px;width:20.5px;text-align:center;top:409.2px;color:#1a1ae0;font-weight:bold">H3</div>
<div class="t h" style="right:304.4px;top:420.8px;color:#111;font-size:6.9px;letter-spacing:-0.15px">80<span class="dc">℃</span></div>
<div class="t h" style="right:304.4px;top:431.7px;color:#111;font-size:6.9px;letter-spacing:-0.15px">80<span class="dc">℃</span></div>
<div class="cell" style="left:452.0px;top:406px;width:20.5px;height:34px;background:#fff;border-right-color:#c4c4c4;"></div>
<div class="t h" style="left:452.0px;width:20.5px;text-align:center;top:409.2px;color:#1a1ae0;font-weight:bold">H5</div>
<div class="t h" style="right:280.7px;top:420.8px;color:#111;font-size:6.9px;letter-spacing:-0.15px">210<span class="dc">℃</span></div>
<div class="t h" style="right:280.7px;top:431.7px;color:#111;font-size:6.9px;letter-spacing:-0.15px">210<span class="dc">℃</span></div>
<div class="cell" style="left:475.7px;top:406px;width:20.5px;height:34px;background:#fff;"></div>
<div class="t h" style="left:475.7px;width:20.5px;text-align:center;top:409.2px;color:#1a1ae0;font-weight:bold">H7</div>
<div class="t h" style="right:257.0px;top:420.8px;color:#111;font-size:6.9px;letter-spacing:-0.15px">80<span class="dc">℃</span></div>
<div class="t h" style="right:257.0px;top:431.7px;color:#111;font-size:6.9px;letter-spacing:-0.15px">80<span class="dc">℃</span></div>
<div class="cell" style="left:499.4px;top:406px;width:20.5px;height:34px;background:#fff;border-left-color:#c4c4c4;border-right-color:#c4c4c4;"></div>
<div class="t h" style="left:499.4px;width:20.5px;text-align:center;top:409.2px;color:#1a1ae0;font-weight:bold">H9</div>
<div class="t h" style="right:233.3px;top:420.8px;color:#111;font-size:6.9px;letter-spacing:-0.15px">190<span class="dc">℃</span></div>
<div class="t h" style="right:233.3px;top:431.7px;color:#111;font-size:6.9px;letter-spacing:-0.15px">190<span class="dc">℃</span></div>
<div class="cell" style="left:523.1px;top:406px;width:20.5px;height:34px;background:#fff;"></div>
<div class="t h" style="left:523.1px;width:20.5px;text-align:center;top:409.2px;color:#1a1ae0;font-weight:bold">H11</div>
<div class="t h" style="right:209.6px;top:420.8px;color:#111;font-size:6.9px;letter-spacing:-0.15px">190<span class="dc">℃</span></div>
<div class="t h" style="right:209.6px;top:431.7px;color:#111;font-size:6.9px;letter-spacing:-0.15px">190<span class="dc">℃</span></div>
<div class="cell" style="left:546.8px;top:406px;width:20.5px;height:34px;background:#c9c9c9;"></div>
<div class="t h" style="left:546.8px;width:20.5px;text-align:center;top:409.2px;color:#1a1ae0;font-weight:bold">H13</div>
<div class="t h" style="right:185.9px;top:420.8px;color:#9a9a9a;font-size:6.9px;letter-spacing:-0.15px">180<span class="dc">℃</span></div>
<div class="t h" style="right:185.9px;top:431.7px;color:#9a9a9a;font-size:6.9px;letter-spacing:-0.15px">30<span class="dc">℃</span></div>
<div class="cell" style="left:570.5px;top:406px;width:20.5px;height:34px;background:#fff;"></div>
<div class="t h" style="left:570.5px;width:20.5px;text-align:center;top:409.2px;color:#1a1ae0;font-weight:bold">H15</div>
<div class="t h" style="right:162.2px;top:420.8px;color:#111;font-size:6.9px;letter-spacing:-0.15px">200<span class="dc">℃</span></div>
<div class="t h" style="right:162.2px;top:431.7px;color:#111;font-size:6.9px;letter-spacing:-0.15px">200<span class="dc">℃</span></div>
<div class="cell" style="left:594.2px;top:406px;width:20.5px;height:34px;background:#c9c9c9;"></div>
<div class="t h" style="left:594.2px;width:20.5px;text-align:center;top:409.2px;color:#1a1ae0;font-weight:bold">H17</div>
<div class="t h" style="right:138.5px;top:420.8px;color:#9a9a9a;font-size:6.9px;letter-spacing:-0.15px">180<span class="dc">℃</span></div>
<div class="t h" style="right:138.5px;top:431.7px;color:#9a9a9a;font-size:6.9px;letter-spacing:-0.15px">28<span class="dc">℃</span></div>
<div class="cell" style="left:617.9px;top:406px;width:20.5px;height:34px;background:#c9c9c9;"></div>
<div class="t h" style="left:617.9px;width:20.5px;text-align:center;top:409.2px;color:#1a1ae0;font-weight:bold">H19</div>
<div class="t h" style="right:114.8px;top:420.8px;color:#9a9a9a;font-size:6.9px;letter-spacing:-0.15px">160<span class="dc">℃</span></div>
<div class="t h" style="right:114.8px;top:431.7px;color:#9a9a9a;font-size:6.9px;letter-spacing:-0.15px">27<span class="dc">℃</span></div>
<div class="cell" style="left:641.6px;top:406px;width:20.5px;height:34px;background:#fff;"></div>
<div class="t h" style="left:641.6px;width:20.5px;text-align:center;top:409.2px;color:#111;font-weight:normal">Cb</div>
<div class="t h" style="right:91.3px;top:420.8px;color:#111;font-size:6.9px;letter-spacing:-0.15px">-</div>
<div class="t h" style="right:91.1px;top:431.7px;color:#111;font-size:6.9px;letter-spacing:-0.15px">21<span class="dc">℃</span></div>
</body></html>
